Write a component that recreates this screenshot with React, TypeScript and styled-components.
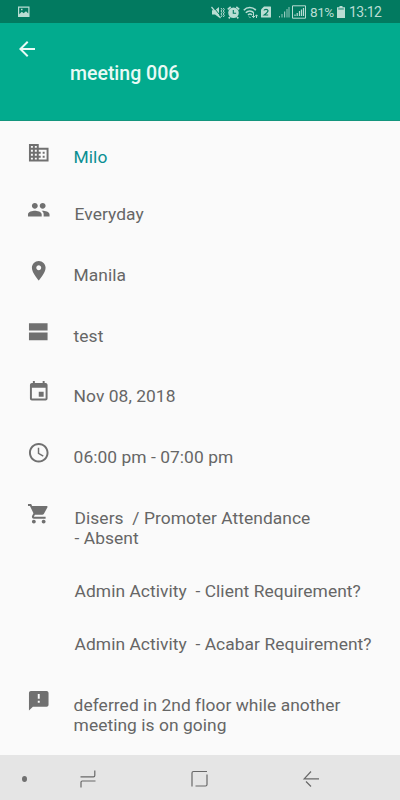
import React from "react";
import styled, { createGlobalStyle } from "styled-components";

const GlobalStyle = createGlobalStyle`
  *, *::before, *::after { box-sizing: border-box; }
  body { margin: 0; background: #fafafa; }
`;

const Screen = styled.div`
  display: flex;
  flex-direction: column;
  width: 400px;
  height: 800px;
  overflow: hidden;
  background: #fafafa;
  font-family: Roboto, "Liberation Sans", sans-serif;
`;

const StatusBar = styled.div`
  display: flex;
  align-items: center;
  flex: none;
  height: 23px;
  padding: 1px 18px 0 18px;
  background: #027a60;
  color: #b9ddd3;
`;

const StatusIcon = styled.svg<{ $gap?: number }>`
  display: block;
  flex: none;
  margin-right: ${(p) => p.$gap ?? 0}px;
`;

const Spacer = styled.div`
  flex: 1;
`;

const StatusText = styled.span<{ $size: number; $width: number }>`
  flex: none;
  width: ${(p) => p.$width}px;
  font-size: ${(p) => p.$size}px;
  line-height: 20px;
  letter-spacing: -0.5px;
  white-space: nowrap;
`;

const AppBar = styled.header`
  display: flex;
  flex-direction: column;
  flex: none;
  height: 98px;
  padding: 14px 0 0 15px;
  background: #02ab8e;
  border-bottom: 1px solid #13957d;
  color: #e9faf5;
`;

const BackButton = styled.button`
  display: block;
  width: 24px;
  height: 24px;
  padding: 0;
  border: 0;
  background: none;
  color: inherit;
`;

const Title = styled.h1`
  margin: 1px 0 0 55px;
  font-size: 19.5px;
  font-weight: 500;
  line-height: 24px;
`;

const Details = styled.main`
  flex: 1;
  padding: 19.5px 0 0 27.3px;
  min-height: 0;
`;

const Row = styled.section<{ $height: number }>`
  display: flex;
  height: ${(p) => p.$height}px;
`;

const RowIcon = styled.svg`
  display: block;
  flex: none;
  width: 23.5px;
  height: 23.5px;
  fill: #707070;
`;

const RowText = styled.div<{ $inset?: boolean; $accent?: boolean }>`
  padding: 6px 0 0 ${(p) => (p.$inset ? 23.8 : 22.8)}px;
  color: ${(p) => (p.$accent ? "#0a8f92" : "#666666")};
  font-size: 17.4px;
  line-height: 20px;
  letter-spacing: 0.05px;
  white-space: pre;
`;

const Activity = styled.p`
  margin: 0 0 33.2px;
`;

const NavBar = styled.nav`
  display: flex;
  align-items: center;
  flex: none;
  height: 45px;
  padding: 2px 79px 0 22px;
  background: #e5e5e5;
`;

const NavDot = styled.span`
  width: 6px;
  height: 6px;
  margin-right: 51px;
  border-radius: 50%;
  background: #707070;
`;

const NavIcon = styled.svg<{ $gap?: number }>`
  display: block;
  flex: none;
  width: 20px;
  height: 20px;
  margin-right: ${(p) => p.$gap ?? 0}px;
  fill: none;
  stroke: #686868;
  stroke-width: 1.2;
`;

const icons = {
  business:
    "M12 7V3H2v18h20V7H12zM6 19H4v-2h2v2zm0-4H4v-2h2v2zm0-4H4V9h2v2zm0-4H4V5h2v2zm4 12H8v-2h2v2zm0-4H8v-2h2v2zm0-4H8V9h2v2zm0-4H8V5h2v2zm10 12h-8v-2h2v-2h-2v-2h2v-2h-2V9h8v10zm-2-8h-2v2h2v-2zm0 4h-2v2h2v-2z",
  people:
    "M16 11c1.66 0 2.99-1.34 2.99-3S17.66 5 16 5c-1.66 0-3 1.34-3 3s1.34 3 3 3zm-8 0c1.66 0 2.99-1.34 2.99-3S9.66 5 8 5C6.34 5 5 6.34 5 8s1.34 3 3 3zm0 2c-2.33 0-7 1.17-7 3.5V19h14v-2.5c0-2.33-4.67-3.5-7-3.5zm8 0c-.29 0-.62.02-.97.05 1.16.84 1.97 1.97 1.97 3.45V19h6v-2.5c0-2.33-4.67-3.5-7-3.5z",
  place:
    "M12 2C8.13 2 5 5.13 5 9c0 5.25 7 13 7 13s7-7.75 7-13c0-3.87-3.13-7-7-7zm0 9.5c-1.38 0-2.5-1.12-2.5-2.5s1.12-2.5 2.5-2.5 2.5 1.12 2.5 2.5-1.12 2.5-2.5 2.5z",
  agenda: "M2 3.3h19v7.5H2zM2 12.700h19v8H2z",
  event:
    "M17 12h-5v5h5v-5zM16 1v2H8V1H6v2H5c-1.11 0-1.99.9-1.99 2L3 19c0 1.1.89 2 2 2h14c1.1 0 2-.9 2-2V5c0-1.1-.9-2-2-2h-1V1h-2zm3 18H5V8h14v11z",
  clock:
    "M11.99 2C6.47 2 2 6.48 2 12s4.47 10 9.99 10C17.52 22 22 17.52 22 12S17.52 2 11.99 2zM12 20c-4.42 0-8-3.58-8-8s3.58-8 8-8 8 3.58 8 8-3.58 8-8 8zm.5-13H11v6l5.25 3.15.75-1.23-4.5-2.67z",
  cart:
    "M7 18c-1.1 0-1.99.9-1.99 2S5.9 22 7 22s2-.9 2-2-.9-2-2-2zM1 2v2h2l3.6 7.59-1.35 2.45c-.16.28-.25.61-.25.96 0 1.1.9 2 2 2h12v-2H7.42c-.14 0-.25-.11-.25-.25l.03-.12.9-1.63h7.45c.75 0 1.41-.41 1.75-1.03l3.58-6.49c.08-.14.12-.31.12-.48 0-.55-.45-1-1-1H5.21l-.94-2H1zm16 16c-1.1 0-1.99.9-1.99 2s.89 2 1.99 2 2-.9 2-2-.9-2-2-2z",
  feedback:
    "M20 2H4c-1.1 0-1.99.9-1.99 2L2 22l4-4h14c1.1 0 2-.9 2-2V4c0-1.1-.9-2-2-2zm-7 12h-2v-2h2v2zm0-4h-2V5h2v5z",
};

interface DetailProps {
  icon: keyof typeof icons;
  height: number;
  inset?: boolean;
  accent?: boolean;
  children: React.ReactNode;
}

function Detail({ icon, height, inset, accent, children }: DetailProps) {
  return (
    <Row $height={height}>
      <RowIcon viewBox="0 0 24 24">
        <path d={icons[icon]} />
      </RowIcon>
      <RowText $inset={inset} $accent={accent}>
        {children}
      </RowText>
    </Row>
  );
}

function SystemStatus() {
  return (
    <StatusBar>
      <StatusIcon width="12" height="12" viewBox="0 0 12 12" fill="currentColor">
        <path fillRule="evenodd" d="M0 .5h11.5v10.5H0zM1.2 1.7v6.6l2.6-2.6 1.8 1.6L8 5.2l2.3 2.2V1.7zM3 2.7h1.5v1.5H3z" />
      </StatusIcon>
      <Spacer />
      <StatusIcon $gap={2} width="14" height="13" viewBox="0 0 14 13">
        <path fill="currentColor" d="M1 4.2h3L8 1v10.5L4 8.4H1z" />
        <path d="M2 .5l8 10" stroke="#027a60" strokeWidth="1" />
        <path d="M.5 1l9 11" stroke="currentColor" strokeWidth="1.2" />
        <path d="M10 2l1 1.5L10 5l1 1.5L10 8l1 1.5-1 1.5M12.3 2l1 1.5-1 1.5 1 1.5-1 1.5 1 1.5-1 1.5" stroke="currentColor" fill="none" />
      </StatusIcon>
      <StatusIcon $gap={3} width="13" height="13" viewBox="0 0 13 13">
        <circle cx="6.5" cy="6.8" r="5.3" fill="currentColor" />
        <path d="M.8 3.4L3.7.9M12.2 3.4L9.3.9M3 11l-1.3 1.3M10 11l1.3 1.3" stroke="currentColor" strokeWidth="1.7" />
        <path d="M6.3 4v3.2h2.8" stroke="#027a60" fill="none" strokeWidth="1.1" />
      </StatusIcon>
      <StatusIcon $gap={2} width="16" height="13" viewBox="0 0 16 13" fill="none" stroke="currentColor" strokeWidth="1.5">
        <path d="M.8 4.2c3.2-3.6 8.8-3.6 12 0M2.8 6.8c2.2-2.4 5.8-2.4 8 0M5 9c1.2-1.2 2.8-1.2 4 0" />
        <path d="M6 10.5l1.5 1.5M10.5 7v4.5M9 10l1.5 1.6L12 10M13.5 9v3M12.3 10.2l1.2-1.4 1.2 1.4" strokeWidth="1" />
      </StatusIcon>
      <StatusIcon $gap={7} width="10" height="12" viewBox="0 0 10 12">
        <path fill="currentColor" d="M3 .5h6.500q.5 0 .5.5v10q0 .5-.5.5h-9q-.5 0-.5-.5V3.500z" />
        <path d="M3 4.500q.2-1.200 2-1.200t2 1.400Q7 6 3.200 9H7.200" fill="none" stroke="#027a60" strokeWidth="1.2" />
      </StatusIcon>
      <StatusIcon $gap={2} width="12" height="12" viewBox="0 0 12 12" fill="currentColor">
        <path d="M1 10h1v1.500H1zM3.500 8h1v3.500h-1zM6 5.500h1.200v6H6zM8.500 3h1v8.500h-1zM10.500 1h1v10.500h-1z" opacity=".8" />
      </StatusIcon>
      <StatusIcon $gap={4} width="14" height="14" viewBox="0 0 14 14" fill="none" stroke="currentColor">
        <path d="M.5.8h13v12.400H.5z" />
        <path d="M3 9.500V11M5.200 8v3M7.500 6v5M9.500 4.500V11M11.500 3v8" strokeWidth="1.2" />
      </StatusIcon>
      <StatusText $size={13.6} $width={27}>81%</StatusText>
      <StatusIcon $gap={4} width="8" height="12" viewBox="0 0 8 12" fill="currentColor">
        <path d="M2.500 0h3v1.200H8V12H0V1.200h2.500z" />
        <path d="M1.200 2.200h5.600v1.500H1.200z" fill="#027a60" opacity=".6" />
      </StatusIcon>
      <StatusText $size={14} $width={33}>13:12</StatusText>
    </StatusBar>
  );
}

export default function App() {
  return (
    <Screen>
      <GlobalStyle />
      <SystemStatus />
      <AppBar>
        <BackButton aria-label="Back">
          <svg width="24" height="24" viewBox="0 0 24 24" fill="currentColor">
            <path d="M20 11H7.83l5.59-5.59L12 4l-8 8 8 8 1.41-1.41L7.83 13H20v-2z" />
          </svg>
        </BackButton>
        <Title>meeting 006</Title>
      </AppBar>
      <Details>
        <Detail icon="business" height={57} accent>Milo</Detail>
        <Detail icon="people" height={61} inset>Everyday</Detail>
        <Detail icon="place" height={61}>Manila</Detail>
        <Detail icon="agenda" height={60.4}>test</Detail>
        <Detail icon="event" height={61}>Nov 08, 2018</Detail>
        <Detail icon="clock" height={61}>06:00 pm - 07:00 pm</Detail>
        <Detail icon="cart" height={187.1} inset>
          <Activity>{"Disers  / Promoter Attendance\n- Absent"}</Activity>
          <Activity>{"Admin Activity  - Client Requirement?"}</Activity>
          <Activity>{"Admin Activity  - Acabar Requirement?"}</Activity>
        </Detail>
        <Detail icon="feedback" height={60}>
          {"deferred in 2nd floor while another\nmeeting is on going"}
        </Detail>
      </Details>
      <NavBar>
        <NavDot />
        <NavIcon $gap={92} viewBox="0 0 20 20">
          <path d="M2.500 7.800H15.500q1.300 0 1.300-1.300V1.500M17.500 12H4.300q-1.300 0-1.300 1.300V18.500" />
        </NavIcon>
        <NavIcon $gap={91} viewBox="0 0 20 20">
          <path d="M2 17.500V4q0-1.500 1.500-1.500H17M17 5.500V15.500q0 1.500-1.500 1.500H5.500" />
        </NavIcon>
        <NavIcon viewBox="0 0 20 20">
          <path d="M18 9.800H3.200L10 2.500M5 12.500l5 5" />
        </NavIcon>
      </NavBar>
    </Screen>
  );
}
